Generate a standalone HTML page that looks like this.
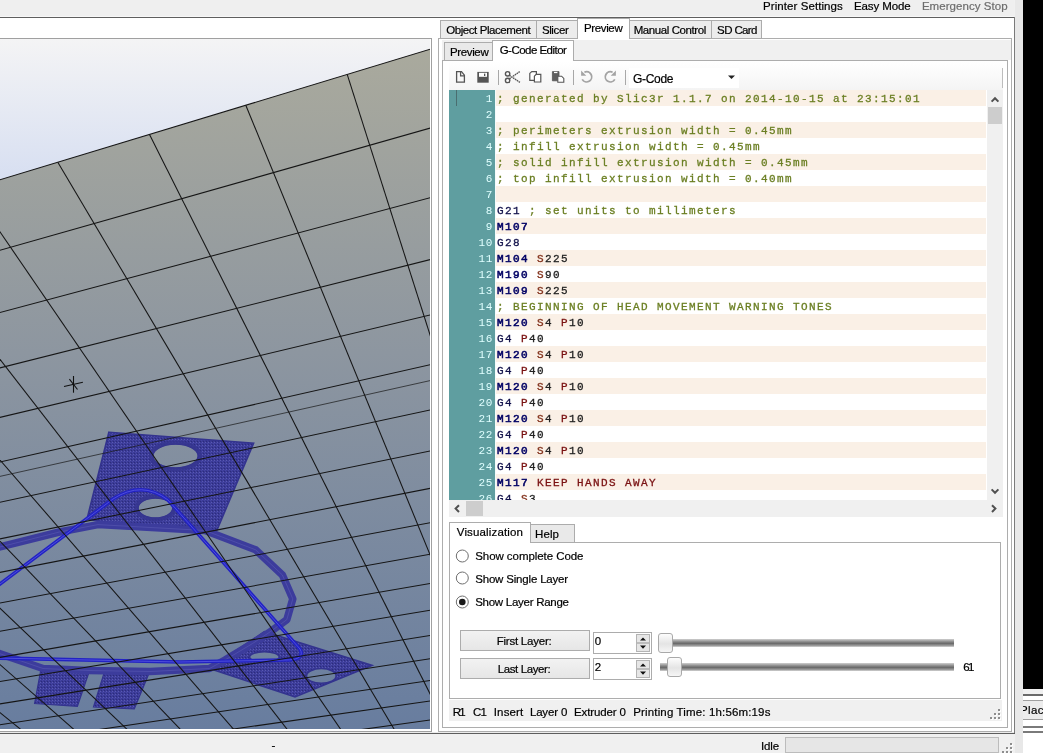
<!DOCTYPE html>
<html><head><meta charset="utf-8"><style>*{margin:0;padding:0;box-sizing:border-box}
html,body{width:1043px;height:753px;overflow:hidden}
body{position:relative;background:#f0f0f0;font-family:'Liberation Sans',sans-serif}
.a{position:absolute}
.t{position:absolute;white-space:pre;line-height:1;font-family:'Liberation Sans',sans-serif;-webkit-text-stroke:0.2px}
.ln{position:absolute;left:0;width:44px;margin-top:1px;text-align:right;font:11px/16px "Liberation Mono",monospace;letter-spacing:0.6px;color:#e0ffff}
.cl{position:absolute;left:48px;margin-top:1px;white-space:pre;font:11px/16px "Liberation Mono",monospace;letter-spacing:1.4px;color:#222;-webkit-text-stroke:0.3px}
.cm{color:#6b7f23}
.cmd{color:#000064;-webkit-text-stroke:0.55px #000064}
.cmdg{color:#10104a}
.prs{color:#82301a}
.prm{color:#7a1212}
</style></head><body>
<div id="root" style="position:absolute;left:0;top:0;width:1043px;height:753px;will-change:transform">
<div class="a" style="left:0px;top:0px;width:1014px;height:16px;background:#efefef"></div>
<div class="a" style="left:0px;top:16px;width:1014px;height:1px;background:#f7f7f7"></div>
<div class="a" style="left:0px;top:17px;width:1014px;height:1px;background:#5f5f5f"></div>
<div class="a" style="left:0px;top:18px;width:1014px;height:715px;background:#fff"></div>
<div class="a" style="left:1014px;top:17px;width:1px;height:717px;background:#7a7a7a"></div>
<div class="a" style="left:0px;top:732px;width:1014px;height:1px;background:#ebebeb"></div>
<div class="a" style="left:0px;top:733px;width:1015px;height:1px;background:#5d5d5d"></div>
<div class="a" style="left:1015px;top:0px;width:8px;height:753px;background:#e8e8e8"></div>
<div class="a" style="left:1023px;top:0px;width:20px;height:689px;background:#000"></div>
<div class="a" style="left:1023px;top:689px;width:20px;height:5px;background:#f0f0f0"></div>
<div class="a" style="left:1023px;top:694px;width:20px;height:2px;background:#6a6a6a"></div>
<div class="a" style="left:1023px;top:696px;width:20px;height:4px;background:#fff"></div>
<div class="a" style="left:1023px;top:700px;width:20px;height:1px;background:#a0a0a0"></div>
<div class="a" style="left:1023px;top:701px;width:20px;height:18px;background:#ececec"></div>
<div class="a" style="left:1023px;top:719px;width:20px;height:1px;background:#a0a0a0"></div>
<div class="a" style="left:1023px;top:720px;width:20px;height:6px;background:#fff"></div>
<div class="a" style="left:1023px;top:726px;width:20px;height:2px;background:#7a7a7a"></div>
<div class="a" style="left:1023px;top:728px;width:20px;height:3px;background:#fff"></div>
<div class="a" style="left:1023px;top:731px;width:20px;height:2px;background:#7a7a7a"></div>
<div class="a" style="left:1023px;top:733px;width:20px;height:20px;background:#fff"></div>
<div class="a" style="left:1023px;top:700px;width:20px;height:20px;overflow:hidden"><div class="t" style="left:-3px;top:5px;font-size:11.5px;letter-spacing:0.4px">Place</div></div>
<div class="t" style="left:763.1px;top:1px;font-size:11.5px;color:#000;letter-spacing:0.072px">Printer Settings</div>
<div class="t" style="left:854.0px;top:1px;font-size:11.5px;color:#000;letter-spacing:-0.104px">Easy Mode</div>
<div class="t" style="left:921.9px;top:1px;font-size:11.5px;color:#6d6d6d;letter-spacing:0.060px">Emergency Stop</div>
<svg width="430" height="690" viewBox="0 39 430 690" style="position:absolute;left:0;top:39px;display:block">
<defs>
<linearGradient id="sky" x1="0" y1="39" x2="0" y2="185" gradientUnits="userSpaceOnUse"><stop offset="0" stop-color="#f4f4f5"/><stop offset="1" stop-color="#d6def1"/></linearGradient>
<linearGradient id="pl" x1="0" y1="45" x2="0" y2="728" gradientUnits="userSpaceOnUse"><stop offset="0" stop-color="#aaaa9d"/><stop offset="0.45" stop-color="#8d96a0"/><stop offset="1" stop-color="#687d9f"/></linearGradient>
<pattern id="mesh" width="3" height="3" patternUnits="userSpaceOnUse"><rect width="3" height="3" fill="#3b3b98"/><rect x="1" y="1" width="1" height="1" fill="#5a5ab2"/><rect x="2" y="0" width="1" height="1" fill="#2c2c7a"/><rect x="0" y="2" width="1" height="1" fill="#4646a4"/></pattern>
</defs>
<rect x="0" y="39" width="430" height="690" fill="url(#sky)"/>
<polygon fill="url(#pl)" points="-826.4,430.6 812.0,-66.6 764.8,858.9 54.3,927.2"/>
<path fill-rule="evenodd" fill="url(#mesh)" stroke="#33338e" stroke-width="1.6" d="M108.9,432.2 L253.6,443.2 L217.0,530.0 L196.0,533.0 L150.0,527.0 L110.0,523.0 L87.0,519.0 Z M152.8,456.0 a22.7,12.0 0 1,0 45.4,0 a22.7,12.0 0 1,0 -45.4,0 Z M138.0,508.0 a17.4,10.0 0 1,0 34.8,0 a17.4,10.0 0 1,0 -34.8,0 Z"/>
<path fill="none" stroke="#36368f" stroke-width="4" opacity="0.85" d="M151.0,456.0 a24.5,13.5 0 1,0 49.0,0 a24.5,13.5 0 1,0 -49.0,0 Z M136.4,508.0 a19.0,11.5 0 1,0 38.0,0 a19.0,11.5 0 1,0 -38.0,0 Z"/>
<path fill-rule="evenodd" fill="url(#mesh)" stroke="#33338e" stroke-width="1.6" d="M209.5,668.5 L264.4,631.6 L372.0,665.4 L295.0,697.0 Z M249.6,657.0 a14.8,5.3 0 1,0 29.6,0 a14.8,5.3 0 1,0 -29.6,0 Z M306.5,675.9 a14.8,7.4 0 1,0 29.6,0 a14.8,7.4 0 1,0 -29.6,0 Z"/>
<path fill="url(#mesh)" stroke="#33338e" stroke-width="1.2" d="M40.7,670.5 L89.3,671.4 L77.4,706.3 L34.6,703.5 Z M104.2,672.5 L150.0,671.0 L134.3,709.0 L93.5,707.0 Z"/>
<path fill="none" stroke="#3c3c9c" stroke-width="7.5" stroke-linejoin="round" d="M-8,549 L59.4,532 L98,524.6 L205,530.5 L255.6,549.8 L282.4,575 L292.8,598.9 L286.8,619.7 L270.5,631.6 L252.6,643.5 L225,660 L209.5,668.5 L150,671.5 L89,670.5 L43,668.5 L-8,651"/>
<path fill="none" stroke="#6060b8" stroke-width="0.9" opacity="0.55" d="M-8,549 L59.4,532 L98,524.6 L205,530.5 L255.6,549.8 L282.4,575 L292.8,598.9 L286.8,619.7 L270.5,631.6 L252.6,643.5 L225,660 L209.5,668.5 L150,671.5 L89,670.5 L43,668.5 L-8,651"/>
<path fill="none" stroke="#2222c4" stroke-width="3.6" d="M-4,587 L113,499 Q142,480 168,500 L300,649 Q306,660 285,660 L180,662 L-4,658"/>
<path fill="none" stroke="#5a5ae0" stroke-width="0.8" d="M-4,587 L113,499 Q142,480 168,500 L300,649 Q306,660 285,660 L180,662 L-4,658"/>
<g stroke="#151515" stroke-width="1.05" fill="none">
<line x1="-826.4" y1="430.6" x2="812.0" y2="-66.6"/>
<line x1="-762.1" y1="466.8" x2="807.6" y2="20.9"/>
<line x1="-703.0" y1="500.2" x2="803.6" y2="98.0"/>
<line x1="-648.3" y1="531.1" x2="800.1" y2="166.5"/>
<line x1="-597.5" y1="559.7" x2="797.0" y2="227.6"/>
<line x1="-550.4" y1="586.2" x2="794.2" y2="282.6"/>
<line x1="-506.5" y1="611.0" x2="791.7" y2="332.3"/>
<line x1="-465.4" y1="634.1" x2="789.4" y2="377.4"/>
<line x1="-427.0" y1="655.8" x2="787.3" y2="418.6"/>
<line x1="-390.9" y1="676.1" x2="785.3" y2="456.3"/>
<line x1="-357.0" y1="695.3" x2="783.6" y2="490.9"/>
<line x1="-325.1" y1="713.3" x2="781.9" y2="522.9"/>
<line x1="-295.0" y1="730.2" x2="780.4" y2="552.4"/>
<line x1="-266.5" y1="746.3" x2="779.0" y2="579.9"/>
<line x1="-239.6" y1="761.5" x2="777.7" y2="605.4"/>
<line x1="-214.0" y1="775.9" x2="776.5" y2="629.2"/>
<line x1="-189.8" y1="789.6" x2="775.3" y2="651.5"/>
<line x1="-166.7" y1="802.6" x2="774.3" y2="672.4"/>
<line x1="-144.8" y1="814.9" x2="773.3" y2="692.0"/>
<line x1="-123.9" y1="826.7" x2="772.3" y2="710.4"/>
<line x1="-104.0" y1="838.0" x2="771.5" y2="727.8"/>
<line x1="-84.9" y1="848.7" x2="770.6" y2="744.2"/>
<line x1="-66.7" y1="859.0" x2="769.8" y2="759.7"/>
<line x1="-49.3" y1="868.8" x2="769.1" y2="774.4"/>
<line x1="-32.6" y1="878.2" x2="768.4" y2="788.3"/>
<line x1="-16.6" y1="887.2" x2="767.7" y2="801.6"/>
<line x1="-719.0" y1="398.0" x2="114.9" y2="921.4"/>
<line x1="-662.2" y1="380.8" x2="145.9" y2="918.4"/>
<line x1="-603.1" y1="362.8" x2="177.4" y2="915.4"/>
<line x1="-541.6" y1="344.2" x2="209.5" y2="912.3"/>
<line x1="-477.5" y1="324.7" x2="242.1" y2="909.2"/>
<line x1="-410.8" y1="304.5" x2="275.3" y2="906.0"/>
<line x1="-341.1" y1="283.3" x2="309.0" y2="902.7"/>
<line x1="-268.4" y1="261.3" x2="343.4" y2="899.4"/>
<line x1="-192.4" y1="238.2" x2="378.3" y2="896.1"/>
<line x1="-112.8" y1="214.1" x2="413.9" y2="892.6"/>
<line x1="-29.5" y1="188.8" x2="450.1" y2="889.1"/>
<line x1="57.8" y1="162.3" x2="486.9" y2="885.6"/>
<line x1="149.5" y1="134.4" x2="524.4" y2="882.0"/>
<line x1="245.8" y1="105.2" x2="562.7" y2="878.3"/>
<line x1="347.2" y1="74.4" x2="601.6" y2="874.6"/>
<line x1="454.1" y1="42.0" x2="641.2" y2="870.8"/>
<line x1="566.8" y1="7.8" x2="681.6" y2="866.9"/>
<line x1="685.9" y1="-28.4" x2="722.8" y2="862.9"/>
</g>
<line x1="-5" y1="477.5" x2="435" y2="379.5" stroke="#1a1a1a" stroke-width="0.9" opacity="0.8"/>
<g stroke="#111" stroke-width="1.1"><line x1="73.5" y1="376" x2="73.5" y2="392.7"/><line x1="64" y1="386.5" x2="82.9" y2="382.2"/><line x1="69.4" y1="379.2" x2="77.5" y2="389.5"/></g>
</svg>

<div class="a" style="left:0px;top:38px;width:432px;height:1px;background:#a0a0a0"></div>
<div class="a" style="left:430px;top:39px;width:1px;height:692px;background:#fff"></div>
<div class="a" style="left:0px;top:729px;width:431px;height:2px;background:#fff"></div>
<div class="a" style="left:431px;top:38px;width:1px;height:694px;background:#a0a0a0"></div>
<div class="a" style="left:0px;top:731px;width:432px;height:1px;background:#a0a0a0"></div>
<div class="a" style="left:438px;top:38px;width:574px;height:694px;border:1px solid #adadad;background:#fff"></div>
<div class="a" style="left:440px;top:20px;width:97px;height:19px;background:#ececec;border:1px solid #acacac"></div>
<div class="a" style="left:536px;top:20px;width:42px;height:19px;background:#ececec;border:1px solid #acacac"></div>
<div class="a" style="left:629px;top:20px;width:83px;height:19px;background:#ececec;border:1px solid #acacac"></div>
<div class="a" style="left:711px;top:20px;width:51px;height:19px;background:#ececec;border:1px solid #acacac"></div>
<div class="a" style="left:577px;top:18px;width:53px;height:21px;background:#fff;border:1px solid #acacac;border-bottom:none"></div>
<div class="t" style="left:446.2px;top:25px;font-size:11.5px;color:#000;letter-spacing:-0.424px">Object Placement</div>
<div class="t" style="left:541.9px;top:25px;font-size:11.5px;color:#000;letter-spacing:-0.373px">Slicer</div>
<div class="t" style="left:583.9px;top:23px;font-size:11.5px;color:#000;letter-spacing:-0.351px">Preview</div>
<div class="t" style="left:633.7px;top:25px;font-size:11.5px;color:#000;letter-spacing:-0.414px">Manual Control</div>
<div class="t" style="left:717.1px;top:25px;font-size:11.5px;color:#000;letter-spacing:-0.618px">SD Card</div>
<div class="a" style="left:442px;top:40px;width:569px;height:20px;background:#f0f0f0"></div>
<div class="a" style="left:442px;top:60px;width:566px;height:668px;border:1px solid #adadad;background:#fff"></div>
<div class="a" style="left:444px;top:42px;width:49px;height:19px;background:#e9e9e9;border:1px solid #acacac"></div>
<div class="a" style="left:492px;top:40px;width:82px;height:21px;background:#fff;border:1px solid #acacac;border-bottom:none"></div>
<div class="t" style="left:449.9px;top:47px;font-size:11.5px;color:#000;letter-spacing:-0.351px">Preview</div>
<div class="t" style="left:499.7px;top:45px;font-size:11.5px;color:#000;letter-spacing:-0.526px">G-Code Editor</div>
<div class="a" style="left:449px;top:62px;width:554px;height:28px;background:linear-gradient(#ffffff,#f4f4f4)"></div>
<div class="a" style="left:1002px;top:68px;width:1px;height:20px;background:#bdbdbd"></div>
<div class="a" style="left:498px;top:70px;width:1px;height:15px;background:#a8a8a8"></div>
<div class="a" style="left:573px;top:70px;width:1px;height:15px;background:#a8a8a8"></div>
<div class="a" style="left:625px;top:70px;width:1px;height:15px;background:#a8a8a8"></div>
<svg class="a" style="left:449px;top:64px" width="200" height="26" viewBox="449 64 200 26">
<g fill="none" stroke="#555" stroke-width="1.3" stroke-linejoin="miter">
<path d="M456.6,71.6 H461.5 L464.4,75.2 V82.2 H456.6 Z"/><path d="M460.6,71.6 V75.8 H464.4"/>
</g>
<path d="M477.3,71.9 H488.7 V82.7 H477.3 Z" fill="#555"/><rect x="479" y="72.8" width="8" height="4" fill="#fff"/><rect x="484" y="73.6" width="1.3" height="2.4" fill="#555"/>
<g fill="none" stroke="#555" stroke-width="1.4">
<ellipse cx="507.6" cy="73.8" rx="2.2" ry="2.2"/><ellipse cx="507.6" cy="80.4" rx="2.2" ry="2.2"/>
<path d="M509.4,75.4 L520,82.4 M509.4,78.8 L520,71.4" stroke-dasharray="1.6 0.6"/>
</g>
<g fill="#fff" stroke="#555" stroke-width="1.2">
<path d="M529.8,73.4 L531.8,71.6 H536.4 V80.4 H529.8 Z"/><path d="M534.4,76.2 L536.2,74.4 H540.8 V82 H534.4 Z"/>
</g>
<path d="M552.4,71.6 H559 V80.8 H552.4 Z" fill="#606060" stroke="#555" stroke-width="0.8"/><rect x="554" y="71.9" width="3.4" height="1.2" fill="#fff"/>
<path d="M557.8,76.2 H561.6 L563.8,78.4 V82.2 H557.8 Z" fill="#fff" stroke="#555" stroke-width="1.1"/>
<g fill="none" stroke="#a4a4a4" stroke-width="1.8">
<path d="M584.4,72.2 A5.1,5.1 0 1,1 582.2,79.4"/><path d="M612.6,72.2 A5.1,5.1 0 1,0 614.8,79.4"/>
</g>
<path d="M581.1,70.6 L581.1,75.8 L586.3,75.8 Z" fill="#a4a4a4"/><path d="M615.9,70.6 L615.9,75.8 L610.7,75.8 Z" fill="#a4a4a4"/>
</svg>
<div class="a" style="left:629px;top:68px;width:110px;height:20px;background:#fff"></div>
<div class="t" style="left:632.9px;top:73px;font-size:12px;color:#000;letter-spacing:-0.286px">G-Code</div>
<svg class="a" style="left:727px;top:74px" width="10" height="8"><path d="M1,1.5 H8 L4.5,5 Z" fill="#222"/></svg>
<div class="a" style="left:449px;top:90px;width:46px;height:410px;background:#5f9ea0"></div>
<div class="a" style="left:495px;top:90px;width:1px;height:410px;background:#f4fbfb"></div>
<div class="a" style="left:449px;top:90px;width:538px;height:410px;overflow:hidden"><div class="a" style="left:47px;top:0px;width:490px;height:16px;background:#faf0e6"></div>
<div class="ln" style="top:0px">1</div>
<div class="cl" style="top:0px"><span class="cm">; generated by Slic3r 1.1.7 on 2014-10-15 at 23:15:01</span></div>
<div class="a" style="left:47px;top:16px;width:490px;height:16px;background:#fff"></div>
<div class="ln" style="top:16px">2</div>
<div class="cl" style="top:16px"></div>
<div class="a" style="left:47px;top:32px;width:490px;height:16px;background:#faf0e6"></div>
<div class="ln" style="top:32px">3</div>
<div class="cl" style="top:32px"><span class="cm">; perimeters extrusion width = 0.45mm</span></div>
<div class="a" style="left:47px;top:48px;width:490px;height:16px;background:#fff"></div>
<div class="ln" style="top:48px">4</div>
<div class="cl" style="top:48px"><span class="cm">; infill extrusion width = 0.45mm</span></div>
<div class="a" style="left:47px;top:64px;width:490px;height:16px;background:#faf0e6"></div>
<div class="ln" style="top:64px">5</div>
<div class="cl" style="top:64px"><span class="cm">; solid infill extrusion width = 0.45mm</span></div>
<div class="a" style="left:47px;top:80px;width:490px;height:16px;background:#fff"></div>
<div class="ln" style="top:80px">6</div>
<div class="cl" style="top:80px"><span class="cm">; top infill extrusion width = 0.40mm</span></div>
<div class="a" style="left:47px;top:96px;width:490px;height:16px;background:#faf0e6"></div>
<div class="ln" style="top:96px">7</div>
<div class="cl" style="top:96px"></div>
<div class="a" style="left:47px;top:112px;width:490px;height:16px;background:#fff"></div>
<div class="ln" style="top:112px">8</div>
<div class="cl" style="top:112px"><span class="cmdg">G21</span> <span class="cm">; set units to millimeters</span></div>
<div class="a" style="left:47px;top:128px;width:490px;height:16px;background:#faf0e6"></div>
<div class="ln" style="top:128px">9</div>
<div class="cl" style="top:128px"><span class="cmd">M107</span></div>
<div class="a" style="left:47px;top:144px;width:490px;height:16px;background:#fff"></div>
<div class="ln" style="top:144px">10</div>
<div class="cl" style="top:144px"><span class="cmdg">G28</span></div>
<div class="a" style="left:47px;top:160px;width:490px;height:16px;background:#faf0e6"></div>
<div class="ln" style="top:160px">11</div>
<div class="cl" style="top:160px"><span class="cmd">M104</span> <span class="prs">S</span>225</div>
<div class="a" style="left:47px;top:176px;width:490px;height:16px;background:#fff"></div>
<div class="ln" style="top:176px">12</div>
<div class="cl" style="top:176px"><span class="cmd">M190</span> <span class="prs">S</span>90</div>
<div class="a" style="left:47px;top:192px;width:490px;height:16px;background:#faf0e6"></div>
<div class="ln" style="top:192px">13</div>
<div class="cl" style="top:192px"><span class="cmd">M109</span> <span class="prs">S</span>225</div>
<div class="a" style="left:47px;top:208px;width:490px;height:16px;background:#fff"></div>
<div class="ln" style="top:208px">14</div>
<div class="cl" style="top:208px"><span class="cm">; BEGINNING OF HEAD MOVEMENT WARNING TONES</span></div>
<div class="a" style="left:47px;top:224px;width:490px;height:16px;background:#faf0e6"></div>
<div class="ln" style="top:224px">15</div>
<div class="cl" style="top:224px"><span class="cmd">M120</span> <span class="prs">S</span>4 <span class="prm">P</span>10</div>
<div class="a" style="left:47px;top:240px;width:490px;height:16px;background:#fff"></div>
<div class="ln" style="top:240px">16</div>
<div class="cl" style="top:240px"><span class="cmdg">G4</span> <span class="prm">P</span>40</div>
<div class="a" style="left:47px;top:256px;width:490px;height:16px;background:#faf0e6"></div>
<div class="ln" style="top:256px">17</div>
<div class="cl" style="top:256px"><span class="cmd">M120</span> <span class="prs">S</span>4 <span class="prm">P</span>10</div>
<div class="a" style="left:47px;top:272px;width:490px;height:16px;background:#fff"></div>
<div class="ln" style="top:272px">18</div>
<div class="cl" style="top:272px"><span class="cmdg">G4</span> <span class="prm">P</span>40</div>
<div class="a" style="left:47px;top:288px;width:490px;height:16px;background:#faf0e6"></div>
<div class="ln" style="top:288px">19</div>
<div class="cl" style="top:288px"><span class="cmd">M120</span> <span class="prs">S</span>4 <span class="prm">P</span>10</div>
<div class="a" style="left:47px;top:304px;width:490px;height:16px;background:#fff"></div>
<div class="ln" style="top:304px">20</div>
<div class="cl" style="top:304px"><span class="cmdg">G4</span> <span class="prm">P</span>40</div>
<div class="a" style="left:47px;top:320px;width:490px;height:16px;background:#faf0e6"></div>
<div class="ln" style="top:320px">21</div>
<div class="cl" style="top:320px"><span class="cmd">M120</span> <span class="prs">S</span>4 <span class="prm">P</span>10</div>
<div class="a" style="left:47px;top:336px;width:490px;height:16px;background:#fff"></div>
<div class="ln" style="top:336px">22</div>
<div class="cl" style="top:336px"><span class="cmdg">G4</span> <span class="prm">P</span>40</div>
<div class="a" style="left:47px;top:352px;width:490px;height:16px;background:#faf0e6"></div>
<div class="ln" style="top:352px">23</div>
<div class="cl" style="top:352px"><span class="cmd">M120</span> <span class="prs">S</span>4 <span class="prm">P</span>10</div>
<div class="a" style="left:47px;top:368px;width:490px;height:16px;background:#fff"></div>
<div class="ln" style="top:368px">24</div>
<div class="cl" style="top:368px"><span class="cmdg">G4</span> <span class="prm">P</span>40</div>
<div class="a" style="left:47px;top:384px;width:490px;height:16px;background:#faf0e6"></div>
<div class="ln" style="top:384px">25</div>
<div class="cl" style="top:384px"><span class="cmd">M117</span><span class="prm"> KEEP HANDS AWAY</span></div>
<div class="a" style="left:47px;top:400px;width:490px;height:16px;background:#fff"></div>
<div class="ln" style="top:400px">26</div>
<div class="cl" style="top:400px"><span class="cmdg">G4</span> <span class="prs">S</span>3</div></div>
<div class="a" style="left:456px;top:90px;width:1px;height:16px;background:#4a6e70"></div>
<div class="a" style="left:987px;top:90px;width:16px;height:410px;background:#f0f0f0"></div>
<div class="a" style="left:988px;top:107px;width:14px;height:17px;background:#cdcdcd"></div>
<svg class="a" style="left:987px;top:90px" width="16" height="410"><path d="M4.6,11.6 L8,8.2 L11.4,11.6" fill="none" stroke="#505050" stroke-width="2"/><path d="M4.6,399.4 L8,402.8 L11.4,399.4" fill="none" stroke="#505050" stroke-width="2"/></svg>
<div class="a" style="left:449px;top:500px;width:554px;height:17px;background:#f0f0f0"></div>
<div class="a" style="left:466px;top:501px;width:17px;height:15px;background:#cdcdcd"></div>
<svg class="a" style="left:449px;top:500px" width="554" height="17"><path d="M10,5.2 L6.6,8.6 L10,12" fill="none" stroke="#505050" stroke-width="2"/><path d="M543,5.2 L546.4,8.6 L543,12" fill="none" stroke="#505050" stroke-width="2"/></svg>
<div class="a" style="left:449px;top:542px;width:552px;height:157px;border:1px solid #adadad;background:#fff"></div>
<div class="a" style="left:530px;top:524px;width:45px;height:19px;background:#e9e9e9;border:1px solid #acacac"></div>
<div class="a" style="left:449px;top:522px;width:82px;height:21px;background:#fff;border:1px solid #acacac;border-bottom:none"></div>
<div class="t" style="left:456.8px;top:527px;font-size:11.5px;color:#000;letter-spacing:0.153px">Visualization</div>
<div class="t" style="left:535.0px;top:529px;font-size:11.5px;color:#000;letter-spacing:0.115px">Help</div>
<svg class="a" style="left:455px;top:548.6px" width="15" height="15"><circle cx="7.3" cy="7" r="6" fill="#fff" stroke="#6e6e6e" stroke-width="1"/></svg>
<div class="t" style="left:475.2px;top:551px;font-size:11.5px;color:#000;letter-spacing:-0.060px">Show complete Code</div>
<svg class="a" style="left:455px;top:571.2px" width="15" height="15"><circle cx="7.3" cy="7" r="6" fill="#fff" stroke="#6e6e6e" stroke-width="1"/></svg>
<div class="t" style="left:475.2px;top:574px;font-size:11.5px;color:#000;letter-spacing:-0.182px">Show Single Layer</div>
<svg class="a" style="left:455px;top:594.7px" width="15" height="15"><circle cx="7.3" cy="7" r="6" fill="#fff" stroke="#6e6e6e" stroke-width="1"/><circle cx="7.3" cy="7" r="3.3" fill="#1a1a1a"/></svg>
<div class="t" style="left:475.2px;top:597px;font-size:11.5px;color:#000;letter-spacing:-0.268px">Show Layer Range</div>
<div class="a" style="left:460px;top:630px;width:130px;height:21px;background:linear-gradient(#f2f2f2,#e6e6e6);border:1px solid #acacac"></div>
<div class="t" style="left:496.7px;top:636px;font-size:11.5px;color:#000;letter-spacing:-0.229px">First Layer:</div>
<div class="a" style="left:460px;top:658px;width:130px;height:21px;background:linear-gradient(#f2f2f2,#e6e6e6);border:1px solid #acacac"></div>
<div class="t" style="left:497.8px;top:664px;font-size:11.5px;color:#000;letter-spacing:-0.411px">Last Layer:</div>
<div class="a" style="left:593px;top:632px;width:59px;height:22px;background:#fff;border:1px solid #acacac"></div>
<div class="a" style="left:636px;top:634px;width:14px;height:18px;background:#e6e6e6;border:1px solid #b4b4b4"></div>
<div class="a" style="left:637px;top:642px;width:12px;height:2px;background:#bdbdbd"></div>
<svg class="a" style="left:636px;top:634px" width="14" height="18"><path d="M4,6.6 H10 L7,3.4 Z M4,11.6 H10 L7,14.8 Z" fill="#111"/></svg>
<div class="t" style="left:594.7px;top:636px;font-size:11.5px;color:#000;letter-spacing:0.000px">0</div>
<div class="a" style="left:593px;top:658px;width:59px;height:22px;background:#fff;border:1px solid #acacac"></div>
<div class="a" style="left:636px;top:660px;width:14px;height:18px;background:#e6e6e6;border:1px solid #b4b4b4"></div>
<div class="a" style="left:637px;top:668px;width:12px;height:2px;background:#bdbdbd"></div>
<svg class="a" style="left:636px;top:660px" width="14" height="18"><path d="M4,6.6 H10 L7,3.4 Z M4,11.6 H10 L7,14.8 Z" fill="#111"/></svg>
<div class="t" style="left:594.7px;top:662px;font-size:11.5px;color:#000;letter-spacing:0.000px">2</div>
<div class="a" style="left:660px;top:639px;width:294px;height:8px;background:linear-gradient(#d0d0d0 0%,#8a8a8a 35%,#6a6a6a 55%,#a0a0a0 85%,#d8d8d8 100%)"></div>
<div class="a" style="left:660px;top:663px;width:294px;height:8px;background:linear-gradient(#d0d0d0 0%,#8a8a8a 35%,#6a6a6a 55%,#a0a0a0 85%,#d8d8d8 100%)"></div>
<div class="a" style="left:658px;top:633px;width:15px;height:20px;background:linear-gradient(#fdfdfd,#e4e4e4 55%,#f6f6f6);border:1px solid #a9a9a9;border-radius:3px"></div>
<div class="a" style="left:667px;top:657px;width:15px;height:20px;background:linear-gradient(#fdfdfd,#e4e4e4 55%,#f6f6f6);border:1px solid #a9a9a9;border-radius:3px"></div>
<div class="t" style="left:963.3px;top:662px;font-size:11.5px;color:#000;letter-spacing:-1.797px">61</div>
<div class="a" style="left:449px;top:700px;width:553px;height:21px;background:#f0f0f0"></div>
<div class="t" style="left:452.8px;top:707px;font-size:11.5px;color:#000;letter-spacing:-1.803px">R1</div>
<div class="t" style="left:472.9px;top:707px;font-size:11.5px;color:#000;letter-spacing:-0.803px">C1</div>
<div class="t" style="left:493.8px;top:707px;font-size:11.5px;color:#000;letter-spacing:0.127px">Insert</div>
<div class="t" style="left:529.9px;top:707px;font-size:11.5px;color:#000;letter-spacing:-0.160px">Layer 0</div>
<div class="t" style="left:574.0px;top:707px;font-size:11.5px;color:#000;letter-spacing:-0.129px">Extruder 0</div>
<div class="t" style="left:633.3px;top:707px;font-size:11.5px;color:#000;letter-spacing:0.146px">Printing Time: 1h:56m:19s</div>
<svg class="a" style="left:988px;top:707px" width="16" height="16"><rect x="11" y="3" width="2" height="2" fill="#fff"/><rect x="10" y="2" width="2" height="2" fill="#8e8e8e"/><rect x="7" y="7" width="2" height="2" fill="#fff"/><rect x="6" y="6" width="2" height="2" fill="#8e8e8e"/><rect x="11" y="7" width="2" height="2" fill="#fff"/><rect x="10" y="6" width="2" height="2" fill="#8e8e8e"/><rect x="3" y="11" width="2" height="2" fill="#fff"/><rect x="2" y="10" width="2" height="2" fill="#8e8e8e"/><rect x="7" y="11" width="2" height="2" fill="#fff"/><rect x="6" y="10" width="2" height="2" fill="#8e8e8e"/><rect x="11" y="11" width="2" height="2" fill="#fff"/><rect x="10" y="10" width="2" height="2" fill="#8e8e8e"/></svg>
<div class="t" style="left:271.5px;top:740px;font-size:11.5px;color:#000;letter-spacing:0.000px">-</div>
<div class="t" style="left:760.9px;top:741px;font-size:11.5px;color:#000;letter-spacing:-0.082px">Idle</div>
<div class="a" style="left:785px;top:737px;width:214px;height:16px;background:#e6e6e6;border:1px solid #bcbcbc"></div>
<svg class="a" style="left:1000px;top:741px" width="16" height="12"><rect x="11" y="3" width="2" height="2" fill="#fff"/><rect x="10" y="2" width="2" height="2" fill="#8e8e8e"/><rect x="7" y="7" width="2" height="2" fill="#fff"/><rect x="6" y="6" width="2" height="2" fill="#8e8e8e"/><rect x="11" y="7" width="2" height="2" fill="#fff"/><rect x="10" y="6" width="2" height="2" fill="#8e8e8e"/><rect x="3" y="11" width="2" height="2" fill="#fff"/><rect x="2" y="10" width="2" height="2" fill="#8e8e8e"/><rect x="7" y="11" width="2" height="2" fill="#fff"/><rect x="6" y="10" width="2" height="2" fill="#8e8e8e"/><rect x="11" y="11" width="2" height="2" fill="#fff"/><rect x="10" y="10" width="2" height="2" fill="#8e8e8e"/></svg>
</div></body></html>
